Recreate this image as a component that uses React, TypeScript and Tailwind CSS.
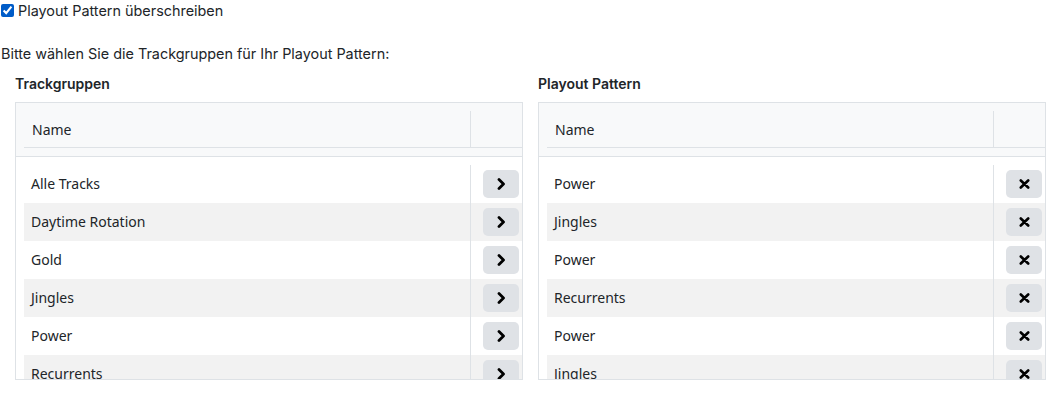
const groups = ['Alle Tracks', 'Daytime Rotation', 'Gold', 'Jingles', 'Power', 'Recurrents', 'Top 40']
const pattern = ['Power', 'Jingles', 'Power', 'Recurrents', 'Power', 'Jingles', 'Gold']

function Chevron() {
  return (
    <svg width="9" height="12" viewBox="0 0 9 12" fill="none">
      <path d="M2 1.5 L6.5 6 L2 10.5" stroke="#000" strokeWidth="2.8" strokeLinecap="round" strokeLinejoin="round" />
    </svg>
  )
}

function Cross() {
  return (
    <svg width="11" height="10" viewBox="0 0 11 10" fill="none">
      <path d="M1.8 1.5 L9.2 8.5 M9.2 1.5 L1.8 8.5" stroke="#000" strokeWidth="2.6" strokeLinecap="round" />
    </svg>
  )
}

function Panel({
  title,
  rows,
  action,
}: {
  title: string
  rows: string[]
  action: 'add' | 'remove'
}) {
  return (
    <div>
      <h6 className="mb-[8px] h-[20px] text-[14px] font-semibold leading-[20px] text-[#212529]">
        {title}
      </h6>
      <div className="flex h-[278px] flex-col border border-[#dee2e6]">
        <div className="shrink-0 border-b border-[#dee2e6] bg-[#f8f9fa] pb-[8px] pl-[8px] pt-[8px]">
          <div className="flex h-[37px] border-b border-[#dee2e6]">
            <div className="flex flex-1 items-center pl-[8px] font-['Noto_Sans',sans-serif] text-[14px] text-[#212529]">
              Name
            </div>
            <div className="w-[52px] border-l border-[#dee2e6]" />
          </div>
        </div>
        <div className="min-h-0 flex-1 overflow-hidden bg-white pl-[8px] pt-[8px]">
          {rows.map((r, i) => (
            <div
              key={i}
              className={'flex h-[38px] ' + (i % 2 === 1 ? 'bg-[#f2f2f2]' : 'bg-white')}
            >
              <div className="flex flex-1 items-center pb-[2px] pl-[7px] font-['Noto_Sans',sans-serif] text-[14px] text-[#212529]">
                {r}
              </div>
              <div className="flex w-[52px] items-center border-l border-[#dee2e6] pl-[12px]">
                <button className="flex h-[28px] w-[36px] items-center justify-center rounded-[5px] bg-[#dfe2e6]">
                  {action === 'add' ? <Chevron /> : <Cross />}
                </button>
              </div>
            </div>
          ))}
        </div>
      </div>
    </div>
  )
}

export default function App() {
  return (
    <div className="h-[410px] bg-white font-['Inter',sans-serif] text-[14.4px] text-[#212529]">
      <label className="flex h-[21px] items-center gap-[4px] pl-[1px]">
        <input type="checkbox" checked readOnly className="m-0 h-[13px] w-[13px]" />
        <span>Playout Pattern überschreiben</span>
      </label>
      <p className="mt-[22px] h-[21px] pl-[1px] leading-[21px]">
        Bitte wählen Sie die Trackgruppen für Ihr Playout Pattern:
      </p>
      <div className="mt-[10px] grid grid-cols-2 gap-[15px] px-[15px]">
        <Panel title="Trackgruppen" rows={groups} action="add" />
        <Panel title="Playout Pattern" rows={pattern} action="remove" />
      </div>
    </div>
  )
}
